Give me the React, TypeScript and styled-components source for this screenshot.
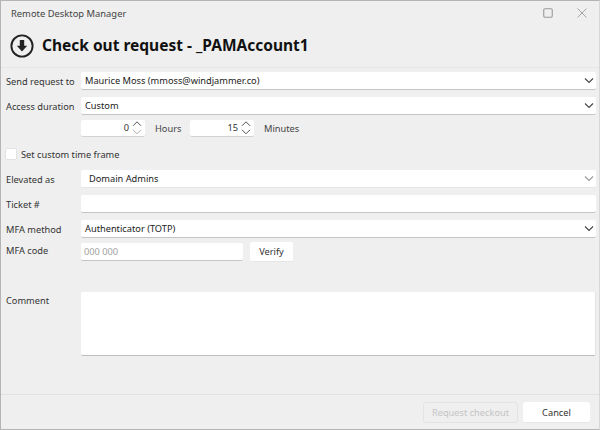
import React from "react"
import styled, { createGlobalStyle } from "styled-components"

const GlobalStyle = createGlobalStyle`
  html, body {
    margin: 0;
    padding: 0;
    background: #efefef;
  }
  * {
    box-sizing: border-box;
  }
`

const CHEVRON = "M1 1.5 L5 5.5 L9 1.5"

const Chevron = ({ faded }: { faded?: boolean }) => (
  <ChevronIcon viewBox="0 0 10 7" $faded={faded}>
    <path d={CHEVRON} />
  </ChevronIcon>
)

const Select = ({ value, indented, faded }: { value: string; indented?: boolean; faded?: boolean }) => (
  <SelectBox $faded={faded}>
    <FieldText $indented={indented}>{value}</FieldText>
    <Chevron faded={faded} />
  </SelectBox>
)

const Spinner = ({ value, width, downFaded }: { value: string; width: number; downFaded?: boolean }) => (
  <SpinBox $width={width}>
    <SpinValue>{value}</SpinValue>
    <SpinArrows viewBox="0 0 12 16" $downFaded={downFaded}>
      <path className="up" d="M2 5.8 L6 1.8 L10 5.8" />
      <path className="down" d="M2 9.8 L6 13.8 L10 9.8" />
    </SpinArrows>
  </SpinBox>
)

const App = () => (
  <Window>
    <GlobalStyle />
    <TitleBar>
      <AppName>Remote Desktop Manager</AppName>
      <WindowControls>
        <svg width="10" height="10" viewBox="0 0 10 10">
          <rect x="0.75" y="0.75" width="8.5" height="8.5" rx="1.2" fill="none" stroke="#9a9a9a" strokeWidth="1.1" />
        </svg>
        <svg width="10" height="10" viewBox="0 0 10 10">
          <path d="M0.5 0.5 L9.5 9.5 M9.5 0.5 L0.5 9.5" stroke="#a5a5a5" strokeWidth="1" />
        </svg>
      </WindowControls>
    </TitleBar>

    <Header>
      <svg width="24" height="24" viewBox="0 0 24 24">
        <circle cx="12" cy="12" r="10.6" fill="none" stroke="#222" strokeWidth="1.9" />
        <path d="M9.8 6 H14.2 V11.8 H17.2 L12 17.6 L6.8 11.8 H9.8 Z" fill="#222" />
      </svg>
      <Heading>Check out request - _PAMAccount1</Heading>
    </Header>

    <Form>
      <Row $top={4}>
        <Label>Send request to</Label>
        <Select value="Maurice Moss (mmoss@windjammer.co)" />
      </Row>
      <Row $top={7}>
        <Label>Access duration</Label>
        <Select value="Custom" />
      </Row>
      <Row $top={4}>
        <Label />
        <Spinner value="0" width={64} downFaded />
        <UnitLabel $width={45}>Hours</UnitLabel>
        <Spinner value="15" width={64} />
        <UnitLabel>Minutes</UnitLabel>
      </Row>
      <CheckRow>
        <CheckBox />
        <span>Set custom time frame</span>
      </CheckRow>
      <Row $top={10}>
        <Label>Elevated as</Label>
        <Select value="Domain Admins" indented faded />
      </Row>
      <Row $top={7}>
        <Label>Ticket #</Label>
        <TextField />
      </Row>
      <Row $top={7}>
        <Label>MFA method</Label>
        <Select value="Authenticator (TOTP)" />
      </Row>
      <Row $top={5}>
        <MfaLabel>MFA code</MfaLabel>
        <TextField $width={162}>
          <Placeholder>000 000</Placeholder>
        </TextField>
        <VerifyButton>Verify</VerifyButton>
      </Row>
      <CommentRow>
        <CommentLabel>Comment</CommentLabel>
        <CommentBox />
      </CommentRow>
    </Form>

    <Footer>
      <DisabledButton>Request checkout</DisabledButton>
      <CancelButton>Cancel</CancelButton>
    </Footer>
  </Window>
)

export default App

const Window = styled.div`
  width: 600px;
  height: 430px;
  display: flex;
  flex-direction: column;
  overflow: hidden;
  background: #efefef;
  border-top: 1px solid #b4b4b4;
  border-left: 1px solid #b4b4b4;
  border-bottom: 1px solid #b4b4b4;
  border-right: 1px solid #d8d8d8;
  color: #222;
  font-family: "Noto Sans", sans-serif;
  font-size: 9.25px;
`

const TitleBar = styled.div`
  height: 24px;
  display: flex;
  align-items: center;
  justify-content: space-between;
  padding: 0 12px 0 10px;
`

const AppName = styled.div`
  font-size: 9.4px;
  color: #444;
`

const WindowControls = styled.div`
  display: flex;
  align-items: center;
  gap: 24px;
`

const Header = styled.div`
  height: 43px;
  display: flex;
  align-items: center;
  gap: 8px;
  padding: 0 0 1px 9px;
  border-bottom: 1px solid #e5e5e5;
`

const Heading = styled.h1`
  margin: 0 0 1px;
  font-size: 15.5px;
  font-weight: 700;
  color: #111;
  white-space: nowrap;
`

const Form = styled.div`
  flex: 1;
  display: flex;
  flex-direction: column;
  padding: 0 3px 0 5px;
`

const Row = styled.div<{ $top: number }>`
  height: 18px;
  margin-top: ${(p) => p.$top}px;
  display: flex;
  align-items: center;
`

const Label = styled.div`
  width: 75px;
  flex: none;
  white-space: nowrap;
  color: #333;
`

const MfaLabel = styled(Label)`
  margin-top: -3px;
`

const CommentLabel = styled(Label)`
  padding-top: 2px;
`

const SelectBox = styled.div<{ $faded?: boolean }>`
  flex: 1;
  height: 100%;
  display: flex;
  align-items: center;
  justify-content: space-between;
  padding: 0 2px 0 4px;
  background: #fff;
  border-radius: 2px;
  border-bottom: 1px solid ${(p) => (p.$faded ? "#e6e6e6" : "#c4c4c4")};
`

const FieldText = styled.span<{ $indented?: boolean }>`
  padding-left: ${(p) => (p.$indented ? 4 : 0)}px;
  color: #222;
`

const ChevronIcon = styled.svg<{ $faded?: boolean }>`
  width: 10px;
  height: 7px;
  path {
    fill: none;
    stroke: ${(p) => (p.$faded ? "#9a9a9a" : "#444")};
    stroke-width: 1.1;
  }
`

const SpinBox = styled.div<{ $width: number }>`
  width: ${(p) => p.$width}px;
  height: 17px;
  display: flex;
  align-items: center;
  justify-content: flex-end;
  gap: 2px;
  padding-right: 2px;
  background: #fff;
  border-radius: 2px;
  border-bottom: 1px solid #d2d2d2;
`

const SpinValue = styled.span`
  color: #333;
`

const SpinArrows = styled.svg<{ $downFaded?: boolean }>`
  width: 12px;
  height: 16px;
  path {
    fill: none;
    stroke-width: 1;
  }
  .up {
    stroke: #555;
  }
  .down {
    stroke: ${(p) => (p.$downFaded ? "#a8a8a8" : "#555")};
  }
`

const UnitLabel = styled.span<{ $width?: number }>`
  width: ${(p) => (p.$width ? `${p.$width}px` : "auto")};
  padding-left: 10px;
  flex: none;
  color: #444;
`

const CheckRow = styled.div`
  margin-top: 11px;
  height: 12px;
  display: flex;
  align-items: center;
  gap: 4px;
  color: #333;
`

const CheckBox = styled.div`
  width: 12px;
  height: 12px;
  margin-left: -1px;
  background: #fff;
  border: 1px solid #e2e2e2;
  border-radius: 2px;
`

const TextField = styled.div<{ $width?: number }>`
  ${(p) => (p.$width ? `width: ${p.$width}px;` : "flex: 1;")}
  height: 18px;
  display: flex;
  align-items: center;
  padding: 0 3px;
  background: #fff;
  border-radius: 2px;
  border-bottom: 1px solid #c4c4c4;
`

const Placeholder = styled.span`
  color: #a2a2a2;
`

const VerifyButton = styled.div`
  width: 43px;
  height: 20px;
  margin-left: 7px;
  display: flex;
  align-items: center;
  justify-content: center;
  background: #fff;
  border-radius: 2px;
  border-bottom: 1px solid #e6e6e6;
  color: #333;
`

const CommentRow = styled.div`
  margin-top: 31px;
  display: flex;
  align-items: flex-start;
`

const CommentBox = styled.div`
  flex: 1;
  height: 64px;
  background: #fff;
  border-radius: 2px;
  border-bottom: 1px solid #bdbdbd;
  border-right: 1px solid #e4e4e4;
`

const Footer = styled.div`
  height: 35px;
  display: flex;
  justify-content: flex-end;
  align-items: flex-start;
  gap: 5px;
  padding: 7px 9px 0 0;
  border-top: 1px solid #e2e2e2;
`

const DisabledButton = styled.div`
  width: 95px;
  height: 21px;
  display: flex;
  align-items: center;
  justify-content: center;
  border: 1px solid #e3e3e3;
  border-radius: 3px;
  color: #c4c4c4;
`

const CancelButton = styled.div`
  width: 67px;
  height: 21px;
  display: flex;
  align-items: center;
  justify-content: center;
  background: #fff;
  border-radius: 3px;
  border-bottom: 1px solid #e6e6e6;
  color: #333;
`
